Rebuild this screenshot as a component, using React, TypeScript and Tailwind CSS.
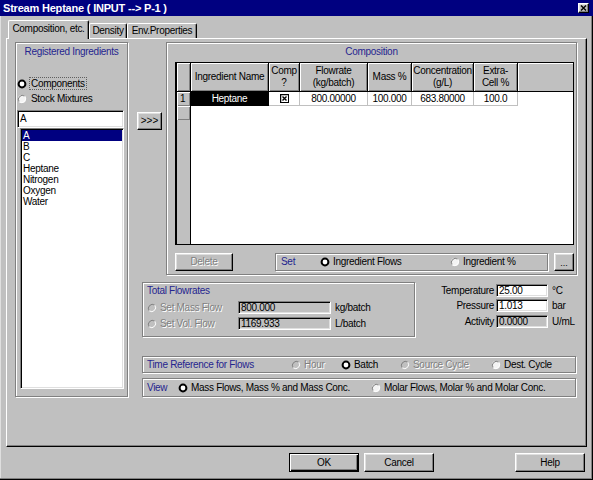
import React from "react";

const BLUE = "text-[#25258f]";
const DIS = "text-[#808080] [text-shadow:1px_1px_0_#ffffff]";
const RAISED =
  "bg-[#c0c0c0] border border-t-white border-l-white border-r-black border-b-black shadow-[inset_-1px_-1px_0_#808080,inset_1px_1px_0_#dfdfdf]";
const SUNKEN =
  "border border-t-[#808080] border-l-[#808080] border-r-white border-b-white shadow-[inset_1px_1px_0_#000000,inset_-1px_-1px_0_#dfdfdf]";
const ETCHED = "border border-[#808080] shadow-[inset_1px_1px_0_#ffffff,1px_1px_0_#ffffff]";
const HDR =
  "h-full flex items-center justify-center text-center border-r border-black bg-[#c0c0c0] shadow-[inset_1px_1px_0_#ffffff,inset_-1px_-1px_0_#808080] leading-[12px]";
const CELL = "h-full flex items-center justify-center border-r border-b border-[#c0c0c0] bg-white";

function Radio({ checked = false, disabled = false }: { checked?: boolean; disabled?: boolean }) {
  if (checked) {
    return (
      <svg width="10" height="10" viewBox="0 0 10 10" className="shrink-0">
        <circle cx="5" cy="5" r="3.4" fill="#ffffff" stroke="#000000" strokeWidth="2" />
      </svg>
    );
  }
  return (
    <svg width="10" height="10" viewBox="0 0 10 10" className="shrink-0">
      <circle cx="5" cy="5" r="4" fill={disabled ? "#c0c0c0" : "#f4f4f4"} />
      <path d="M2.2 7.8 A4 4 0 0 1 7.8 2.2" fill="none" stroke="#808080" strokeWidth="1" />
      <path d="M7.8 2.2 A4 4 0 0 1 2.2 7.8" fill="none" stroke="#ffffff" strokeWidth="1" />
    </svg>
  );
}

function CheckX() {
  return (
    <svg width="9" height="9" viewBox="0 0 9 9">
      <rect x="0.5" y="0.5" width="8" height="8" fill="#ffffff" stroke="#000000" />
      <path d="M0.5 0.5 L0.5 8.5 M0.5 0.5 L8.5 0.5" stroke="#000000" strokeWidth="1.5" />
      <path d="M2.5 2.5 L6.5 6.5 M6.5 2.5 L2.5 6.5" stroke="#000000" strokeWidth="1.4" />
    </svg>
  );
}

function TitleBar() {
  return (
    <div className="h-[16px] bg-[#000080] flex items-center justify-between pl-[3px] pr-[4px] shrink-0">
      <span className="text-white font-bold text-[11px] tracking-[-0.2px] leading-[14px]">
        Stream Heptane ( INPUT --&gt; P-1 )
      </span>
      <div className={`w-[11px] h-[10px] ${RAISED} flex items-center justify-center`}>
        <svg width="7" height="6" viewBox="0 0 7 6">
          <path d="M1 0.5 L6 5.5 M6 0.5 L1 5.5" stroke="#000000" strokeWidth="1.4" />
        </svg>
      </div>
    </div>
  );
}

function LeftGroup() {
  const items = ["A", "B", "C", "Heptane", "Nitrogen", "Oxygen", "Water"];
  return (
    <div className={`w-[113px] h-[355px] ${ETCHED} flex flex-col shrink-0`}>
      <div className={`text-center ${BLUE} mt-[3px] h-[12px]`}>Registered Ingredients</div>
      <div className="mt-[19px] h-[13px] flex items-center pl-[1px]">
        <Radio checked />
        <span className="ml-[2px] border border-dotted border-[#606060] px-[1px] leading-[11px]">Components</span>
      </div>
      <div className="mt-[3px] h-[12px] flex items-center pl-[1px]">
        <Radio />
        <span className="ml-[4px]">Stock Mixtures</span>
      </div>
      <div className={`mt-[5px] ml-[1px] w-[107px] h-[18px] ${SUNKEN} bg-white pl-[2px] flex items-center`}>A</div>
      <div className={`ml-[4px] w-[104px] h-[261px] ${SUNKEN} bg-white pt-[1px] px-[1px]`}>
        {items.map((it, i) => (
          <div
            key={it}
            className={
              i === 0
                ? "h-[11px] leading-[11px] pl-[1px] bg-[#000080] text-white"
                : "h-[11px] leading-[11px] pl-[1px]"
            }
          >
            {it}
          </div>
        ))}
      </div>
    </div>
  );
}

function Grid() {
  return (
    <div className="ml-[8px] mt-[4px] w-[399px] h-[183px] border border-black border-l-2 bg-white flex flex-col">
      <div className="flex h-[29px] border-b border-black">
        <div className={`${HDR} w-[14px]`} />
        <div className={`${HDR} w-[78px]`}>Ingredient Name</div>
        <div className={`${HDR} w-[31px]`}>
          Comp
          <br />?
        </div>
        <div className={`${HDR} w-[68px]`}>
          Flowrate
          <br />
          (kg/batch)
        </div>
        <div className={`${HDR} w-[44px]`}>Mass %</div>
        <div className={`${HDR} w-[62px]`}>
          Concentration
          <br />
          (g/L)
        </div>
        <div className={`${HDR} w-[44px]`}>
          Extra-
          <br />
          Cell %
        </div>
        <div className="h-full flex-1 bg-[#c0c0c0] shadow-[inset_1px_1px_0_#ffffff]" />
      </div>
      <div className="flex h-[14px]">
        <div className={`${HDR} w-[14px] !justify-start pl-[3px]`}>1</div>
        <div className="h-full w-[78px] flex items-center justify-center bg-black text-white border-r border-black">
          Heptane
        </div>
        <div className={`${CELL} w-[31px]`}>
          <CheckX />
        </div>
        <div className={`${CELL} w-[68px]`}>800.00000</div>
        <div className={`${CELL} w-[44px]`}>100.000</div>
        <div className={`${CELL} w-[62px]`}>683.80000</div>
        <div className={`${CELL} w-[44px]`}>100.0</div>
        <div className="h-full flex-1 bg-white" />
      </div>
      <div className="flex flex-1">
        <div className="w-[14px] border-r border-black bg-[#c0c0c0] flex flex-col">
          <div className="h-[14px] shadow-[inset_1px_1px_0_#ffffff,inset_-1px_-1px_0_#808080]" />
        </div>
        <div className="flex-1 bg-white" />
      </div>
    </div>
  );
}

function CompositionGroup() {
  return (
    <div className={`ml-[4px] w-[411px] h-[233px] ${ETCHED} flex flex-col`}>
      <div className={`text-center ${BLUE} mt-[3px] h-[12px]`}>Composition</div>
      <Grid />
      <div className="flex ml-[8px] mt-[8px] h-[18px]">
        <div className={`w-[58px] h-full ${RAISED} flex items-center justify-center ${DIS}`}>Delete</div>
        <div className={`ml-[42px] w-[273px] h-full ${ETCHED} flex items-center pl-[5px]`}>
          <span className={`${BLUE} w-[39px]`}>Set</span>
          <div className="w-[130px] flex items-center">
            <Radio checked />
            <span className="ml-[3px]">Ingredient Flows</span>
          </div>
          <div className="flex items-center">
            <Radio />
            <span className="ml-[3px]">Ingredient %</span>
          </div>
        </div>
        <div className={`ml-[6px] w-[20px] h-full ${RAISED} flex items-end justify-center pb-[2px] text-[9px] tracking-[0px] leading-[9px]`}>...</div>
      </div>
    </div>
  );
}

function TotalGroup() {
  return (
    <div className={`w-[273px] h-[55px] ${ETCHED} flex flex-col pl-[4px] shrink-0`}>
      <div className={`${BLUE} mt-[2px] h-[12px]`}>Total Flowrates</div>
      <div className="flex items-center mt-[4px] h-[13px]">
        <div className="w-[91px] flex items-center">
          <Radio disabled />
          <span className={`ml-[3px] ${DIS}`}>Set Mass Flow</span>
        </div>
        <div className={`w-[93px] h-[13px] ${SUNKEN} pl-[2px] flex items-center`}>800.000</div>
        <span className="ml-[4px]">kg/batch</span>
      </div>
      <div className="flex items-center mt-[3px] h-[13px]">
        <div className="w-[91px] flex items-center">
          <Radio disabled />
          <span className={`ml-[3px] ${DIS}`}>Set Vol. Flow</span>
        </div>
        <div className={`w-[93px] h-[13px] ${SUNKEN} pl-[2px] flex items-center`}>1169.933</div>
        <span className="ml-[4px]">L/batch</span>
      </div>
    </div>
  );
}

function TempBlock() {
  const rows = [
    { l: "Temperature", v: "25.00", u: "°C", white: true, mt: "mt-[2px]" },
    { l: "Pressure", v: "1.013", u: "bar", white: true, mt: "mt-[2px]" },
    { l: "Activity", v: "0.0000", u: "U/mL", white: false, mt: "mt-[3px]" },
  ];
  return (
    <div className="w-[162px] flex flex-col">
      {rows.map((r) => (
        <div key={r.l} className={`flex items-center h-[13px] ${r.mt}`}>
          <span className="flex-1 text-right pr-[2px]">{r.l}</span>
          <div className={`w-[52px] h-[13px] ${SUNKEN} ${r.white ? "bg-white" : "bg-[#c0c0c0]"} pl-[2px] flex items-center`}>
            {r.v}
          </div>
          <span className="w-[29px] pl-[4px]">{r.u}</span>
        </div>
      ))}
    </div>
  );
}

export default function App() {
  return (
    <div className="w-[593px] h-[480px] bg-[#c0c0c0] flex flex-col overflow-hidden font-['Liberation_Sans',Arial,sans-serif] text-[10px] tracking-[-0.3px] leading-[12px] text-black">
      <TitleBar />
      <div className="flex-1 flex flex-col pl-[6px] pt-[4px] shadow-[inset_-1px_-1px_0_#000000,inset_-2px_-2px_0_#808080,inset_1px_0_0_#dfdfdf]">
        <div className="flex items-end h-[18px] ml-[2px]">
          <div className="relative z-10 w-[81px] h-[19px] -mb-[1px] bg-[#c0c0c0] border-t border-l border-white border-r border-r-black rounded-t-[2px] shadow-[inset_-1px_0_0_#808080] flex items-center justify-center pb-[2px]">
            Composition, etc.
          </div>
          <div className="w-[38px] h-[15px] border-t border-l border-white border-r border-r-black rounded-t-[2px] shadow-[inset_-1px_0_0_#808080] flex items-center justify-center">
            Density
          </div>
          <div className="w-[70px] h-[15px] border-t border-l border-white border-r border-r-black rounded-t-[2px] shadow-[inset_-1px_0_0_#808080] flex items-center justify-center">
            Env.Properties
          </div>
        </div>
        <div className="w-[581px] h-[409px] border-t border-l border-white border-r border-b border-r-black border-b-black shadow-[inset_-1px_-1px_0_#808080] flex pl-[8px] pt-[3px]">
          <LeftGroup />
          <div className="ml-[9px] w-[440px] flex flex-col">
            <div className="flex">
              <div className="w-[25px] pt-[70px]">
                <div className={`w-[25px] h-[18px] ${RAISED} flex items-center justify-center tracking-[0px]`}>&gt;&gt;&gt;</div>
              </div>
              <CompositionGroup />
            </div>
            <div className="flex mt-[7px] ml-[5px]">
              <TotalGroup />
              <TempBlock />
            </div>
            <div className={`ml-[5px] mt-[19px] w-[434px] h-[17px] ${ETCHED} flex items-center pl-[4px]`}>
              <span className={`${BLUE} w-[144px]`}>Time Reference for Flows</span>
              <div className="w-[50px] flex items-center">
                <Radio disabled />
                <span className={`ml-[3px] ${DIS}`}>Hour</span>
              </div>
              <div className="w-[59px] flex items-center">
                <Radio checked />
                <span className="ml-[3px]">Batch</span>
              </div>
              <div className="w-[91px] flex items-center">
                <Radio disabled />
                <span className={`ml-[3px] ${DIS}`}>Source Cycle</span>
              </div>
              <div className="flex items-center">
                <Radio />
                <span className="ml-[3px]">Dest. Cycle</span>
              </div>
            </div>
            <div className={`ml-[5px] mt-[5px] w-[434px] h-[19px] ${ETCHED} flex items-center pl-[4px]`}>
              <span className={`${BLUE} w-[31px]`}>View</span>
              <div className="w-[193px] flex items-center">
                <Radio checked />
                <span className="ml-[3px]">Mass Flows, Mass % and Mass Conc.</span>
              </div>
              <div className="flex items-center">
                <Radio />
                <span className="ml-[3px]">Molar Flows, Molar % and Molar Conc.</span>
              </div>
            </div>
          </div>
        </div>
        <div className="flex mt-[6px] h-[19px]">
          <div className="ml-[283px] w-[70px] h-full bg-[#c0c0c0] border border-black shadow-[inset_1px_1px_0_#ffffff,inset_-1px_-1px_0_#000000,inset_-2px_-2px_0_#808080] flex items-center justify-center">
            OK
          </div>
          <div className={`ml-[5px] w-[70px] h-full ${RAISED} flex items-center justify-center`}>Cancel</div>
          <div className={`ml-[81px] w-[70px] h-full ${RAISED} flex items-center justify-center`}>Help</div>
        </div>
      </div>
    </div>
  );
}
